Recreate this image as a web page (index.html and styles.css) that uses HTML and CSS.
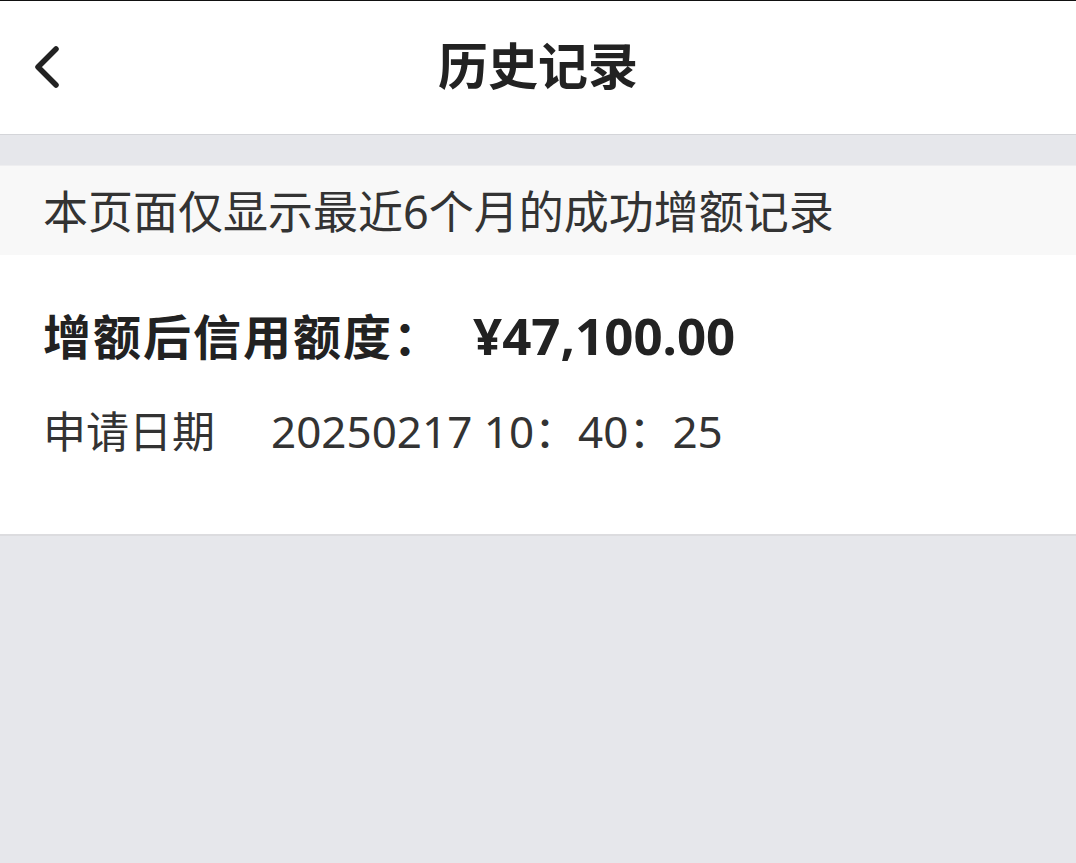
FILE: index.html
```html
<!DOCTYPE html>
<html lang="zh-CN">
  <head>
    <meta charset="UTF-8" />
    <meta name="viewport" content="width=device-width, initial-scale=1.0" />
    <title>历史记录</title>
    <link rel="stylesheet" href="styles.css">
  </head>
  <body>
    <header class="topbar">
      <div class="back">
        <svg width="36" height="48" viewBox="0 0 36 48">
          <path d="M28 6 L10 24 L28 42" fill="none" stroke="#222" stroke-width="5.5" stroke-linecap="round" stroke-linejoin="round" />
        </svg>
      </div>
      <h1>历史记录</h1>
      <div></div>
    </header>

    <div class="spacer"></div>

    <p class="notice">本页面仅显示最近6个月的成功增额记录</p>

    <section class="record">
      <div class="amount">
        <span class="label">增额后信用额度：</span>
        <span class="value">¥47,100.00</span>
      </div>
      <div class="date">
        <span class="label">申请日期</span>
        <span class="value">20250217 10：40：25</span>
      </div>
    </section>
  </body>
</html>
```

FILE: styles.css
```css
* {
  box-sizing: border-box;
  margin: 0;
  padding: 0;
}

body {
  font-family: "Noto Sans", "Noto Sans CJK SC", sans-serif;
  background: #e6e7eb;
  min-height: 100vh;
  border-top: 1px solid #111;
  color: #222;
}

.topbar {
  background: white;
  height: 134px;
  border-bottom: 1px solid #d4d5d9;
  display: grid;
  grid-template-columns: 1fr auto 1fr;
  align-items: center;
}

.back {
  padding-left: 28px;
  display: flex;
  align-items: center;
  margin-top: -2px;
}

.topbar h1 {
  font-size: 50px;
  font-weight: 700;
  color: #222;
  line-height: 1;
  margin-top: -4px;
}

.spacer {
  height: 31px;
  border-bottom: 1px solid #eeeef0;
}

.notice {
  background: #f8f8f8;
  height: 89px;
  padding-left: 43px;
  padding-top: 3px;
  font-size: 45px;
  line-height: 86px;
  color: #333;
}

.record {
  background: white;
  padding: 50px 43px 74px;
  border-bottom: 2px solid #dcdcdf;
}

.amount {
  font-size: 48px;
  font-weight: 700;
  line-height: 60px;
  color: #222;
  display: flex;
  align-items: baseline;
}

.amount .label {
  width: 430px;
  letter-spacing: 2px;
}

.amount .value {
  font-size: 51px;
}

.date {
  margin-top: 36px;
  font-size: 43px;
  line-height: 56px;
  color: #333;
  display: flex;
  align-items: baseline;
}

.date .label {
  width: 228px;
}

.date .value {
  font-size: 44px;
}
```
